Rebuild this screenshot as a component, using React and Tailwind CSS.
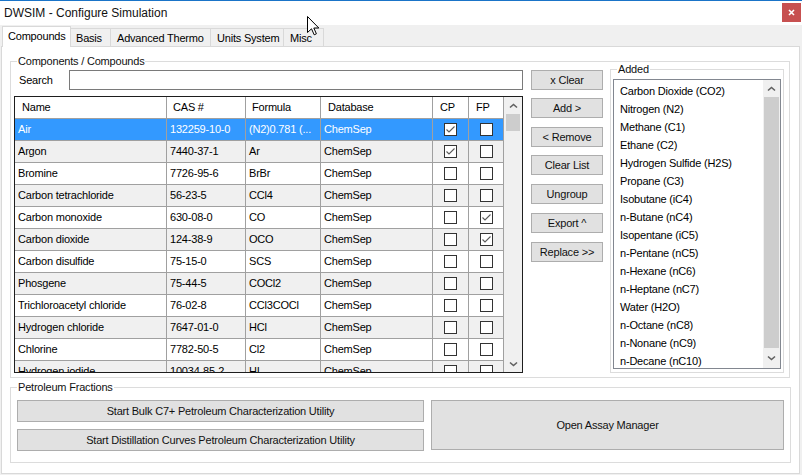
import React from 'react';

const rows = [
  { name: 'Air', cas: '132259-10-0', formula: '(N2)0.781 (...', db: 'ChemSep', cp: true, fp: false },
  { name: 'Argon', cas: '7440-37-1', formula: 'Ar', db: 'ChemSep', cp: true, fp: false },
  { name: 'Bromine', cas: '7726-95-6', formula: 'BrBr', db: 'ChemSep', cp: false, fp: false },
  { name: 'Carbon tetrachloride', cas: '56-23-5', formula: 'CCl4', db: 'ChemSep', cp: false, fp: false },
  { name: 'Carbon monoxide', cas: '630-08-0', formula: 'CO', db: 'ChemSep', cp: false, fp: true },
  { name: 'Carbon dioxide', cas: '124-38-9', formula: 'OCO', db: 'ChemSep', cp: false, fp: true },
  { name: 'Carbon disulfide', cas: '75-15-0', formula: 'SCS', db: 'ChemSep', cp: false, fp: false },
  { name: 'Phosgene', cas: '75-44-5', formula: 'COCl2', db: 'ChemSep', cp: false, fp: false },
  { name: 'Trichloroacetyl chloride', cas: '76-02-8', formula: 'CCl3COCl', db: 'ChemSep', cp: false, fp: false },
  { name: 'Hydrogen chloride', cas: '7647-01-0', formula: 'HCl', db: 'ChemSep', cp: false, fp: false },
  { name: 'Chlorine', cas: '7782-50-5', formula: 'Cl2', db: 'ChemSep', cp: false, fp: false },
  { name: 'Hydrogen iodide', cas: '10034-85-2', formula: 'HI', db: 'ChemSep', cp: false, fp: false },
];

const added = [
  'Carbon Dioxide (CO2)',
  'Nitrogen (N2)',
  'Methane (C1)',
  'Ethane (C2)',
  'Hydrogen Sulfide (H2S)',
  'Propane (C3)',
  'Isobutane (iC4)',
  'n-Butane (nC4)',
  'Isopentane (iC5)',
  'n-Pentane (nC5)',
  'n-Hexane (nC6)',
  'n-Heptane (nC7)',
  'Water (H2O)',
  'n-Octane (nC8)',
  'n-Nonane (nC9)',
  'n-Decane (nC10)',
];

const buttons = [
  { label: 'x Clear', mt: 'mt-0' },
  { label: 'Add >', mt: 'mt-[8px]' },
  { label: '< Remove', mt: 'mt-[9px]' },
  { label: 'Clear List', mt: 'mt-[8px]' },
  { label: 'Ungroup', mt: 'mt-[9px]' },
  { label: 'Export ^', mt: 'mt-[9px]' },
  { label: 'Replace >>', mt: 'mt-[9px]' },
];

function Chevron({ down }) {
  return (
    <svg width="9" height="6" viewBox="0 0 9 6">
      <path
        d={down ? 'M1 1.5 L4.5 4.5 L8 1.5' : 'M1 4.5 L4.5 1.5 L8 4.5'}
        fill="none"
        stroke="#606060"
        strokeWidth="1.6"
      />
    </svg>
  );
}

function CheckBox({ checked }) {
  return (
    <span className="w-[13px] h-[13px] border border-[#333333] bg-white flex items-center justify-center">
      {checked && (
        <svg width="11" height="11" viewBox="0 0 11 11">
          <path d="M1.5 5.5 L4 8 L9.5 2.5" fill="none" stroke="#5a5a5a" strokeWidth="1.1" />
        </svg>
      )}
    </span>
  );
}

function WinButton({ children, className }) {
  return (
    <div className={`bg-[#e1e1e1] border border-[#adadad] flex items-center justify-center text-[#111] ${className}`}>
      {children}
    </div>
  );
}

function GroupLabel({ children }) {
  return (
    <span className="absolute -top-[7px] left-[6px] bg-white px-[1px] leading-[13px] text-[#111]">
      {children}
    </span>
  );
}

export default function App() {
  return (
    <div
      className="w-[802px] h-[475px] bg-[#f0f0f0] flex flex-col relative overflow-hidden text-[11px] tracking-[-0.2px] text-black"
      style={{ fontFamily: '"Liberation Sans", Arial, sans-serif' }}
    >
      {/* title bar */}
      <div className="h-px bg-[#1a74c8]" />
      <div className="h-[24px] bg-white flex items-start justify-between">
        <span className="pl-[4px] pt-[5px] text-[12px] tracking-normal text-[#111] leading-[14px]">
          DWSIM - Configure Simulation
        </span>
        <div className="mt-[2px] mr-[1px] w-[19px] h-[19px] bg-[#c75050] flex items-center justify-center">
          <svg width="7" height="7" viewBox="0 0 7 7">
            <path d="M1 1 L6 6 M6 1 L1 6" stroke="white" strokeWidth="1.6" />
          </svg>
        </div>
      </div>

      {/* tabs */}
      <div className="h-[21px] flex items-end pl-[2px]">
        <div className="relative z-10 -mb-px w-[69px] h-[21px] bg-white border border-b-0 border-[#d9d9d9] pl-[5px] pt-[3px] leading-[13px]">
          Compounds
        </div>
        <div className="w-[40px] h-[18px] bg-[#f0f0f0] border border-l-0 border-b-0 border-[#d9d9d9] pl-[5px] pt-[3px] leading-[13px]">
          Basis
        </div>
        <div className="w-[100px] h-[18px] bg-[#f0f0f0] border border-l-0 border-b-0 border-[#d9d9d9] pl-[6px] pt-[3px] leading-[13px]">
          Advanced Thermo
        </div>
        <div className="w-[73px] h-[18px] bg-[#f0f0f0] border border-l-0 border-b-0 border-[#d9d9d9] pl-[6px] pt-[3px] leading-[13px]">
          Units System
        </div>
        <div className="w-[40px] h-[18px] bg-[#f0f0f0] border border-l-0 border-b-0 border-[#d9d9d9] pl-[6px] pt-[3px] leading-[13px]">
          Misc
        </div>
      </div>

      {/* tab page */}
      <div className="ml-[1px] w-[799px] h-[428px] bg-white border border-[#d9d9d9] flex flex-col">
        {/* Components / Compounds group */}
        <div className="relative mt-[14px] ml-[8px] w-[780px] h-[317px] border border-[#dcdcdc] flex items-start">
          <GroupLabel>Components / Compounds</GroupLabel>

          {/* left: search + grid */}
          <div className="ml-[3px] w-[509px] flex flex-col">
            <div className="mt-[8px] h-[20px] flex items-center">
              <span className="w-[55px] pl-[5px]">Search</span>
              <div className="flex-1 h-[20px] border border-[#7a7a7a] bg-white" />
            </div>

            <div className="mt-[6px] h-[277px] border border-[#1e1e1e] flex overflow-hidden bg-white">
              <div className="flex flex-col w-[489px]">
                {/* header */}
                <div className="h-[22px] flex shrink-0 border-b border-[#a0a0a0] bg-white">
                  <div className="w-[152px] border-r border-[#a0a0a0] pl-[7px] flex items-center">Name</div>
                  <div className="w-[79px] border-r border-[#a0a0a0] pl-[6px] flex items-center">CAS #</div>
                  <div className="w-[75px] border-r border-[#a0a0a0] pl-[6px] flex items-center">Formula</div>
                  <div className="w-[112px] border-r border-[#a0a0a0] pl-[7px] flex items-center">Database</div>
                  <div className="w-[36px] border-r border-[#a0a0a0] pl-[7px] flex items-center">CP</div>
                  <div className="w-[35px] border-r border-[#a0a0a0] pl-[7px] flex items-center">FP</div>
                </div>
                {/* rows */}
                {rows.map((r, i) => {
                  const sel = i === 0;
                  const bg = sel ? 'bg-[#3399ff] text-white' : i % 2 === 1 ? 'bg-[#f0f0f0]' : 'bg-white';
                  return (
                    <div key={r.name} className={`h-[22px] shrink-0 flex border-b border-[#a0a0a0] ${bg}`}>
                      <div className="w-[152px] border-r border-[#a0a0a0] pl-[3px] flex items-center whitespace-nowrap">{r.name}</div>
                      <div className="w-[79px] border-r border-[#a0a0a0] pl-[3px] flex items-center">{r.cas}</div>
                      <div className="w-[75px] border-r border-[#a0a0a0] pl-[3px] flex items-center whitespace-nowrap overflow-hidden">{r.formula}</div>
                      <div className="w-[112px] border-r border-[#a0a0a0] pl-[3px] flex items-center">{r.db}</div>
                      <div className="w-[36px] border-r border-[#a0a0a0] flex items-center justify-center">
                        <CheckBox checked={r.cp} />
                      </div>
                      <div className="w-[35px] border-r border-[#a0a0a0] flex items-center justify-center">
                        <CheckBox checked={r.fp} />
                      </div>
                    </div>
                  );
                })}
              </div>
              {/* grid scrollbar */}
              <div className="w-[18px] bg-[#f0f0f0] flex flex-col">
                <div className="h-[17px] flex items-center justify-center">
                  <Chevron />
                </div>
                <div className="mx-[2px] h-[17px] bg-[#cdcdcd]" />
                <div className="flex-1" />
                <div className="h-[17px] flex items-center justify-center">
                  <Chevron down />
                </div>
              </div>
            </div>
          </div>

          {/* buttons */}
          <div className="ml-[8px] mt-[8px] w-[72px] flex flex-col">
            {buttons.map((b) => (
              <WinButton key={b.label} className={`h-[20px] ${b.mt}`}>
                {b.label}
              </WinButton>
            ))}
          </div>

          {/* Added group */}
          <div className="relative ml-[7px] mt-[7px] w-[174px] h-[304px] border border-[#dcdcdc]">
            <GroupLabel>Added</GroupLabel>
            <div className="mt-[9px] ml-[2px] w-[168px] h-[290px] border border-[#828790] bg-white flex">
              <div className="flex-1 flex flex-col pt-[2px] pl-[6px] overflow-hidden">
                {added.map((a) => (
                  <div key={a} className="h-[18px] shrink-0 flex items-center whitespace-nowrap">
                    {a}
                  </div>
                ))}
              </div>
              <div className="w-[17px] bg-[#f0f0f0] flex flex-col">
                <div className="h-[17px] flex items-center justify-center">
                  <Chevron />
                </div>
                <div className="flex-1 mx-[1px] bg-[#cdcdcd]" />
                <div className="h-[20px] flex items-center justify-center">
                  <Chevron down />
                </div>
              </div>
            </div>
          </div>
        </div>

        {/* Petroleum Fractions group */}
        <div className="relative mt-[9px] ml-[8px] w-[781px] h-[76px] border border-[#dcdcdc] flex items-start">
          <GroupLabel>Petroleum Fractions</GroupLabel>
          <div className="ml-[6px] mt-[12px] w-[407px] flex flex-col">
            <WinButton className="h-[22px]">Start Bulk C7+ Petroleum Characterization Utility</WinButton>
            <WinButton className="h-[22px] mt-[7px]">Start Distillation Curves Petroleum Characterization Utility</WinButton>
          </div>
          <WinButton className="ml-[7px] mt-[12px] w-[353px] h-[50px]">Open Assay Manager</WinButton>
        </div>
      </div>

      {/* mouse pointer */}
      <svg className="absolute left-[307px] top-[16px]" width="13" height="20" viewBox="0 0 13 20">
        <path
          d="M0.5 0.5 L0.5 16.5 L4.5 12.8 L7.2 18.8 L9.4 17.8 L6.8 12 L11.8 12 Z"
          fill="white"
          stroke="black"
          strokeWidth="1"
          strokeLinejoin="round"
        />
      </svg>
    </div>
  );
}
